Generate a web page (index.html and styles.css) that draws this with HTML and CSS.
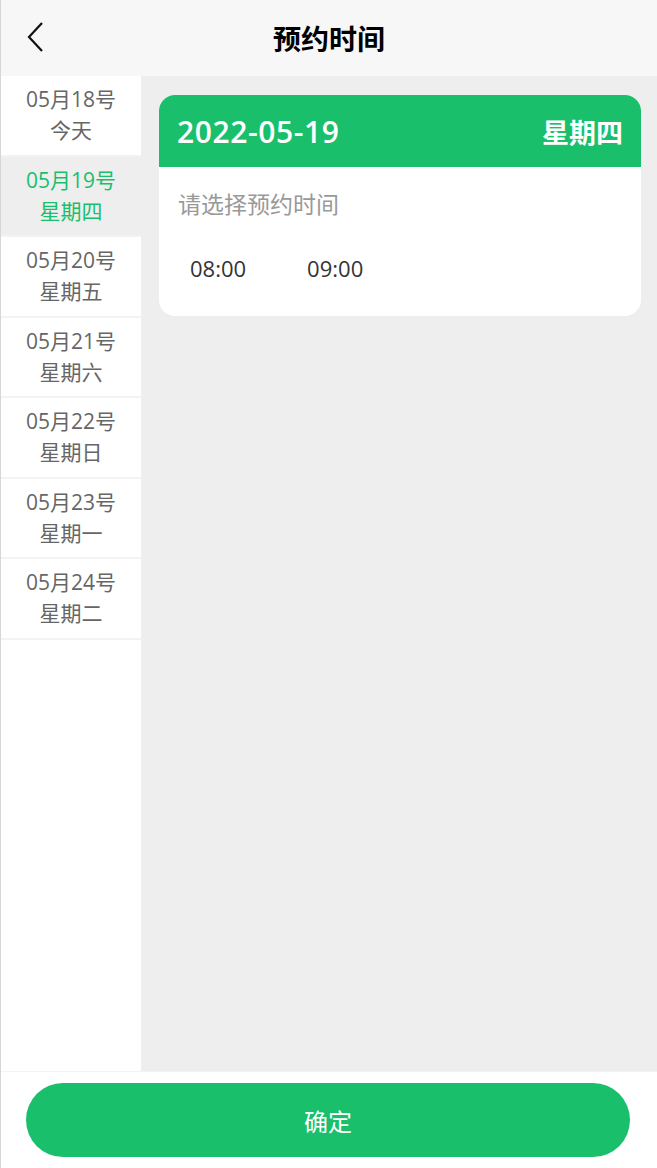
FILE: index.html
```html
<!DOCTYPE html>
<html lang="zh">
<head>
    <meta charset="UTF-8">
    <meta name="viewport" content="width=device-width, initial-scale=1.0">
    <title>预约时间</title>
    <link rel="stylesheet" href="styles.css">
</head>
<body>
    <div class="page">
        <header class="topbar">
            <svg class="back" width="20" height="32" viewBox="0 0 20 32">
                <path d="M17 2 L4 16 L17 30" fill="none" stroke="#111" stroke-width="2.2"/>
            </svg>
            <h1>预约时间</h1>
        </header>
        <div class="main">
            <ul class="days">
                <li><span>05月18号</span><span>今天</span></li>
                <li class="active"><span>05月19号</span><span>星期四</span></li>
                <li><span>05月20号</span><span>星期五</span></li>
                <li><span>05月21号</span><span>星期六</span></li>
                <li><span>05月22号</span><span>星期日</span></li>
                <li><span>05月23号</span><span>星期一</span></li>
                <li><span>05月24号</span><span>星期二</span></li>
            </ul>
            <div class="content">
                <div class="card">
                    <div class="card-head">
                        <span class="date">2022-05-19</span>
                        <span class="week">星期四</span>
                    </div>
                    <div class="card-body">
                        <p class="hint">请选择预约时间</p>
                        <div class="slots">
                            <span>08:00</span>
                            <span>09:00</span>
                        </div>
                    </div>
                </div>
            </div>
        </div>
        <footer class="footer">
            <button type="button">确定</button>
        </footer>
    </div>
</body>
</html>
```

FILE: styles.css
```css
* {
    box-sizing: border-box;
}
body {
    margin: 0;
    font-family: "Open Sans", "Noto Sans CJK SC", sans-serif;
    background: #fff;
}
.page {
    height: 1168px;
    display: flex;
    flex-direction: column;
    border-left: 1px solid #d6d6d6;
}
.topbar {
    height: 76px;
    background: #f7f7f7;
    display: flex;
    align-items: center;
    justify-content: center;
    position: relative;
}
.back {
    position: absolute;
    left: 24px;
    top: 21px;
}
.topbar h1 {
    margin: 0;
    font-family: "Noto Sans CJK SC", sans-serif;
    font-size: 28px;
    font-weight: bold;
    color: #000;
}
.main {
    flex: 1;
    display: flex;
    background: #eeeeee;
}
.days {
    list-style: none;
    margin: 0;
    padding: 0;
    width: 140px;
    background: #fff;
}
.days li {
    height: 80.5px;
    border-bottom: 2px solid #f3f3f3;
    display: flex;
    flex-direction: column;
    align-items: center;
    justify-content: center;
    font-size: 21px;
    line-height: 31px;
    color: #666;
}
.days li.active {
    background: #eeeeee;
    color: #1abf6c;
}
.content {
    flex: 1;
    padding: 19px 16px 0 18px;
}
.card {
    background: #fff;
    border-radius: 16px;
    overflow: hidden;
}
.card-head {
    height: 72px;
    background: #1abf6c;
    color: #fff;
    display: flex;
    align-items: center;
    justify-content: space-between;
    padding: 0 18px;
    font-weight: bold;
}
.date {
    font-size: 30px;
    font-weight: 600;
    letter-spacing: 0.6px;
}
.week {
    font-family: "Noto Sans CJK SC", sans-serif;
    font-size: 27px;
}
.card-body {
    padding: 19px 19px 31px;
}
.hint {
    margin: 0;
    font-family: "Noto Sans CJK SC", sans-serif;
    font-size: 23px;
    line-height: 34px;
    color: #999;
}
.slots {
    display: flex;
    gap: 61px;
    padding: 31px 12px 0;
    font-size: 22px;
    line-height: 34px;
    color: #333;
}
.footer {
    height: 97px;
    background: #fff;
    display: flex;
    align-items: center;
    justify-content: center;
    border-top: 1px solid #f3f3f3;
}
.footer button {
    width: 604px;
    height: 74px;
    border: none;
    border-radius: 37px;
    background: #1abf6c;
    color: #fff;
    font-family: "Noto Sans CJK SC", sans-serif;
    font-size: 24px;
    margin-left: -2px;
}
```
